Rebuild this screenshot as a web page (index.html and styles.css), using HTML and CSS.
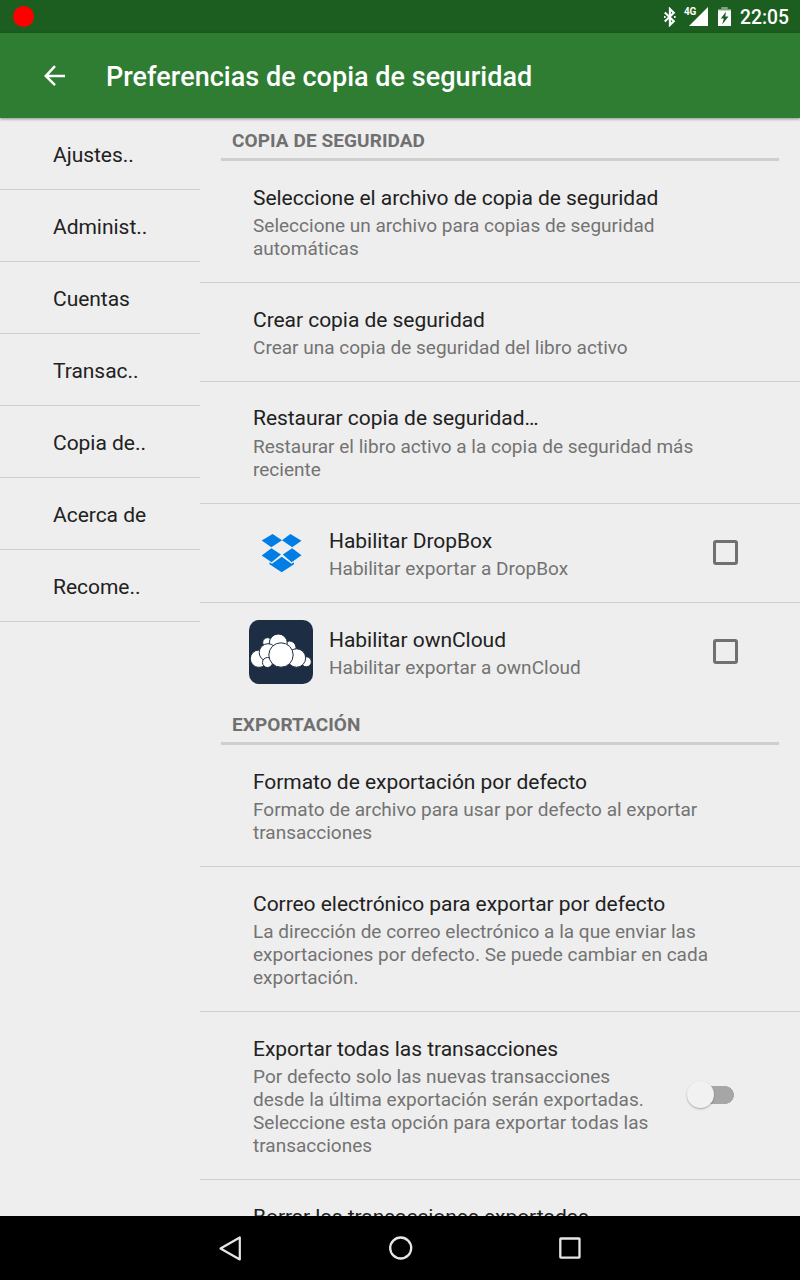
FILE: index.html
```html
<!DOCTYPE html>
<html lang="es">
<head>
<meta charset="utf-8">
<title>Preferencias de copia de seguridad</title>
<link rel="stylesheet" href="styles.css">
</head>
<body>
<div class="screen">
  <div class="status">
    <span class="record"></span>
    <div class="status-icons">
      <svg class="bluetooth" width="14" height="20" viewBox="0 0 14 20" fill="none" stroke="#fff" stroke-width="2.1"><path d="M1.8 5.4 10.8 14.2 6.9 18V2L10.8 5.8 1.8 14.6"/><path d="M1 10h1.6M11 10h1.6" stroke-width="2"/></svg>
      <div class="signal"><span class="net">4G</span><svg width="19" height="19" viewBox="0 0 19 19"><path d="M0 19 19 0V19Z" fill="#fff"/></svg></div>
      <svg class="battery" width="13" height="19" viewBox="0 0 13 19"><path d="M3.3 0H9.7V2H13V4H0V2H3.3Z" fill="#7fa580"/><path fill="#fff" fill-rule="evenodd" d="M0 3.5H13V19H0ZM8 4.8 2.8 11.5H5.8L4.2 17.5 10.5 9.6H7.3Z"/></svg>
      <span class="clock">22:05</span>
    </div>
  </div>
  <header class="appbar">
    <svg class="back" width="22" height="22" viewBox="0 0 22 22" fill="none" stroke="#fff" stroke-width="2.5"><path d="M21 11H2M11 1.2 1.8 11 11 20.2"/></svg>
    <h1 class="heading">Preferencias de copia de seguridad</h1>
  </header>
  <div class="panes">
    <nav class="side">
      <div class="side-item">Ajustes..</div>
      <div class="side-item">Administ..</div>
      <div class="side-item">Cuentas</div>
      <div class="side-item">Transac..</div>
      <div class="side-item">Copia de..</div>
      <div class="side-item">Acerca de</div>
      <div class="side-item">Recome..</div>
    </nav>
    <main class="content">
      <h2 class="section">COPIA DE SEGURIDAD</h2>
      <div class="row"><div class="text"><div class="title">Seleccione el archivo de copia de seguridad</div><div class="summary">Seleccione un archivo para copias de seguridad<br>automáticas</div></div></div>
      <div class="row"><div class="text"><div class="title">Crear copia de seguridad</div><div class="summary">Crear una copia de seguridad del libro activo</div></div></div>
      <div class="row"><div class="text"><div class="title raised">Restaurar copia de seguridad…</div><div class="summary">Restaurar el libro activo a la copia de seguridad más<br>reciente</div></div></div>
      <div class="row with-icon">
        <svg class="logo" width="64" height="64" viewBox="0 0 64 64" fill="#007ee5"><path d="M23.6 13 33 19.3 22.4 26.2 12.7 19.6ZM41.4 13 52.5 19.8 43.2 26.2 33 19.3ZM22.4 27.3 32 33.6 22.6 41.2 12.7 34.5ZM43.2 27.3 52.5 34.3 42.6 41.2 33.8 33.6ZM20.5 41.2 23 42.8 32.7 35.8 42.5 42.8 45 41.2V43.3L32.7 51.2 20.5 43.3Z"/></svg>
        <div class="text"><div class="title">Habilitar DropBox</div><div class="summary">Habilitar exportar a DropBox</div></div>
        <span class="checkbox"></span>
      </div>
      <div class="row with-icon last">
        <svg class="logo" width="64" height="64" viewBox="0 0 64 64"><rect width="64" height="64" rx="10" fill="#1d2d44"/><g fill="#fff" stroke="#1d2d44" stroke-width="1"><circle cx="18.5" cy="22.5" r="4.8"/><circle cx="40.5" cy="27.5" r="6.5"/><circle cx="29.3" cy="23" r="9"/><circle cx="10" cy="38.7" r="8.7"/><circle cx="19" cy="32.5" r="8.8"/><circle cx="57.3" cy="41.8" r="5"/><circle cx="18.5" cy="42.5" r="5"/><circle cx="47.5" cy="38" r="9.2"/><circle cx="32" cy="35" r="12.2"/></g></svg>
        <div class="text"><div class="title">Habilitar ownCloud</div><div class="summary">Habilitar exportar a ownCloud</div></div>
        <span class="checkbox"></span>
      </div>
      <h2 class="section">EXPORTACIÓN</h2>
      <div class="row"><div class="text"><div class="title">Formato de exportación por defecto</div><div class="summary">Formato de archivo para usar por defecto al exportar<br>transacciones</div></div></div>
      <div class="row"><div class="text"><div class="title">Correo electrónico para exportar por defecto</div><div class="summary">La dirección de correo electrónico a la que enviar las<br>exportaciones por defecto. Se puede cambiar en cada<br>exportación.</div></div></div>
      <div class="row"><div class="text"><div class="title">Exportar todas las transacciones</div><div class="summary">Por defecto solo las nuevas transacciones<br>desde la última exportación serán exportadas.<br>Seleccione esta opción para exportar todas las<br>transacciones</div></div><span class="switch"><span class="thumb"></span></span></div>
      <div class="row"><div class="text"><div class="title">Borrar las transacciones exportadas</div></div></div>
    </main>
  </div>
  <footer class="navbar">
    <svg width="24" height="26" viewBox="0 0 24 26" fill="none" stroke="#e6e6e6" stroke-width="2.2" stroke-linejoin="round"><path d="M21.8 2.5V24.5L2.5 13.5Z"/></svg>
    <svg width="24" height="24" viewBox="0 0 24 24" fill="none" stroke="#e6e6e6" stroke-width="2.3"><circle cx="11.7" cy="12" r="10.5"/></svg>
    <svg width="22" height="22" viewBox="0 0 22 22" fill="none" stroke="#e6e6e6" stroke-width="2.3"><rect x="1.3" y="1.5" width="19.2" height="19.2" rx=".6"/></svg>
  </footer>
</div>
</body>
</html>
```
FILE: styles.css
```css
* { box-sizing: border-box; }
body { margin: 0; font-family: Roboto, sans-serif; background: #eee; }
.screen { width: 800px; height: 1280px; display: flex; flex-direction: column; overflow: hidden; }
.status { height: 33px; flex: none; background: #1b5e20; display: flex; align-items: center; justify-content: space-between; padding: 0 11px 0 13px; }
.record { width: 21px; height: 21px; border-radius: 50%; background: #f00; }
.status-icons { display: flex; align-items: center; color: #fff; }
.bluetooth { margin-right: 7px; }
.signal { display: flex; align-items: flex-start; margin-right: 10px; }
.net { font-size: 10px; line-height: 10px; font-weight: 700; letter-spacing: -.4px; width: 5px; white-space: nowrap; }
.clock { font-size: 19.3px; line-height: 24px; font-weight: 500; margin: 3px 0 0 9px; }
.appbar { height: 85px; flex: none; background: #2e7d32; display: flex; align-items: center; padding: 0 44px; box-shadow: 0 1px 3px rgba(0,0,0,.4); z-index: 1; }
.heading { margin: 2px 0 0 40px; color: #fff; font-size: 27px; line-height: 32px; font-weight: 500; letter-spacing: .03px; white-space: nowrap; }
.panes { flex: 1; min-height: 0; display: flex; overflow: hidden; }
.side { width: 200px; flex: none; }
.side-item { height: 72px; padding-left: 53px; border-bottom: 1px solid #cfcfcf; font-size: 21px; line-height: 75px; letter-spacing: -.03px; color: #212121; }
.content { flex: 1; min-width: 0; }
.section { margin: 0 21px; height: 43px; padding: 10px 11px 0; border-bottom: 3px solid #cfcfcf; font-size: 19px; line-height: 26px; font-weight: 700; letter-spacing: .08px; color: #707070; }
.row { display: flex; align-items: center; padding: 24px 66px 22px 53px; border-bottom: 1px solid #cfcfcf; white-space: nowrap; }
.last { border-color: transparent; }
.text { flex: 1; }
.title { font-size: 21px; line-height: 26px; height: 29px; letter-spacing: -.04px; color: #212121; }
.raised { line-height: 24px; }
.summary { font-size: 19px; line-height: 23px; letter-spacing: .01px; color: #737373; }
.with-icon { padding: 0 62px 0 49px; height: 99px; }
.with-icon .text { margin: 1px 0 0 16px; }
.logo { flex: none; margin-bottom: 1px; }
.checkbox { width: 25px; height: 25px; margin-bottom: 1px; border: 3px solid #707070; border-radius: 3px; }
.switch { width: 47px; height: 27px; margin-bottom: 4px; display: flex; align-items: center; background: linear-gradient(#a6a6a6, #a6a6a6) 12px 5px / 26px 18px no-repeat, radial-gradient(circle at 38px 14px, #a6a6a6 8.6px, transparent 9.2px); }
.thumb { width: 27px; height: 27px; border-radius: 50%; background: #f1f1f1; box-shadow: 0 1px 2px rgba(0,0,0,.3); }
.navbar { height: 64px; flex: none; background: #000; display: flex; align-items: center; justify-content: space-between; padding: 0 219px 0 218px; }
```
